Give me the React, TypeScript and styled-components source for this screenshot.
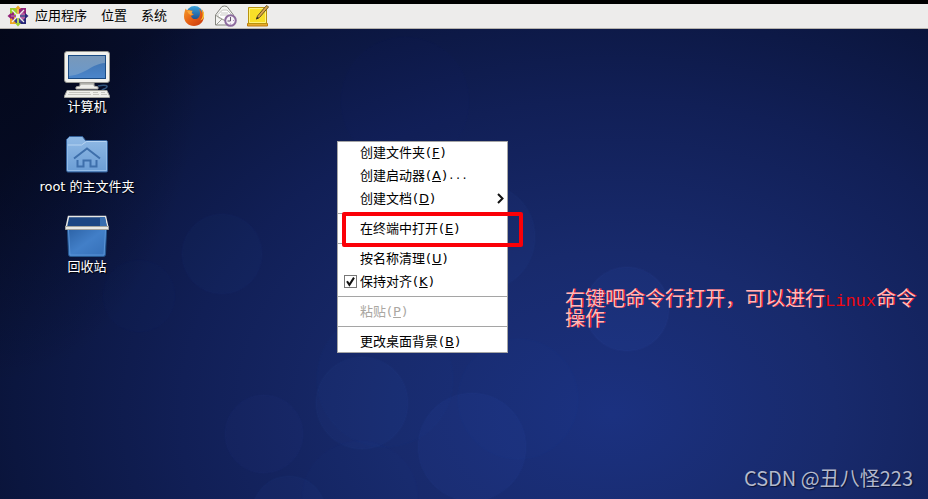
import React from "react";
import styled, { createGlobalStyle } from "styled-components";

const GlobalStyle = createGlobalStyle`
  * { box-sizing: border-box; }
  body {
    margin: 0;
    font-family: "DejaVu Sans", "Noto Sans CJK SC", sans-serif;
    font-size: 13px;
    line-height: 18px;
    background: #000;
  }
`;

const Screen = styled.div`
  display: flex;
  flex-direction: column;
  min-height: 100vh;
  padding-top: 4px;
`;

const Panel = styled.header`
  display: flex;
  align-items: center;
  gap: 12px;
  height: 25px;
  padding: 0 6px;
  background: #edeceb;
  border-bottom: 1px solid #b5b2ac;
`;

const PanelMenus = styled.nav`
  display: flex;
  gap: 14px;
`;

const PanelButton = styled.button`
  display: flex;
  align-items: center;
  gap: 5px;
  height: 24px;
  padding: 0;
  border: 0;
  background: none;
  color: #000;
  font: inherit;
`;

const Launchers = styled.div`
  display: flex;
  gap: 9px;
  padding-left: 4px;
`;

const Desktop = styled.main`
  position: relative;
  flex: 1;
  overflow: hidden;
  background:
    radial-gradient(ellipse 22% 75% at 0% 0%, rgba(1, 3, 14, 0.65), rgba(1, 3, 14, 0) 100%),
    radial-gradient(ellipse 75% 108% at 66% 82%, #1b3180 0%, #182a6c 32%, #111f56 62%, #0b163f 86%, #081030 100%);
`;

const Wallpaper = styled.svg`
  position: absolute;
  inset: 0;
  width: 100%;
  height: 100%;
`;

const IconColumn = styled.div`
  position: relative;
  display: flex;
  flex-direction: column;
  align-items: center;
  gap: 14px;
  width: 174px;
  padding-top: 21px;
`;

const DesktopIcon = styled.button`
  display: flex;
  flex-direction: column;
  align-items: center;
  padding: 0;
  border: 0;
  background: none;
  color: #fff;
  font: inherit;
  white-space: nowrap;
  text-shadow: 1px 1px 1px #000;
`;

const ContextMenu = styled.div`
  position: absolute;
  left: 337px;
  top: 112px;
  width: 171px;
  background: #fff;
  box-shadow: inset 0 0 0 1px #a5a5a5;
`;

const MenuEntry = styled.button`
  display: flex;
  align-items: center;
  width: 100%;
  height: 23px;
  padding: 0 4px 0 23px;
  border: 0;
  background: none;
  color: #000;
  font: inherit;
  white-space: pre;

  &:disabled {
    color: #aaa7a2;
  }

  svg {
    margin-left: auto;
  }
`;

const CheckEntry = styled.label`
  display: flex;
  align-items: center;
  gap: 3px;
  height: 23px;
  padding-left: 7px;
  color: #000;
`;

const CheckBox = styled.input`
  appearance: none;
  width: 13px;
  height: 13px;
  margin: 0;
  border: 1px solid #777;
  background: #fff;

  &:checked {
    background: #fff
      url("data:image/svg+xml,%3Csvg xmlns='http://www.w3.org/2000/svg' viewBox='0 0 11 11'%3E%3Cpath d='M2 5.2 4.4 8.8 9 1.6' fill='none' stroke='%23111' stroke-width='2'/%3E%3C/svg%3E");
  }
`;

const Separator = styled.hr`
  height: 1px;
  margin: 3px 0;
  border: 0;
  background: #a5a5a5;
`;

const Marked = styled.div`
  position: relative;
`;

const RedFrame = styled.div`
  position: absolute;
  left: 5px;
  top: -5px;
  width: 181px;
  height: 35px;
  border: 4px solid #fb0007;
  border-radius: 2px;
  pointer-events: none;
`;

const Bracket = styled.span`
  padding: 0 1px;
`;

const Dots = styled.span`
  font-family: "Liberation Mono", monospace;
  font-size: 11px;
`;

const Note = styled.p`
  position: absolute;
  left: 565px;
  top: 259px;
  right: 10px;
  margin: 0;
  color: #ffb9bc;
  font-family: "Noto Sans CJK SC", sans-serif;
  font-size: 20px;
  line-height: 20px;
  text-shadow: 1px 0 0 #e8101c;
`;

const NoteLatin = styled.span`
  color: #f3060e;
  font-family: "Liberation Mono", monospace;
  font-size: 17px;
  line-height: 1px;
  text-shadow: none;
`;

const Watermark = styled.div`
  position: absolute;
  right: 15px;
  bottom: 9px;
  color: #b3b8cb;
  font-family: "Noto Sans CJK SC", sans-serif;
  font-size: 20px;
  line-height: 24px;
  text-shadow: 1px 1px 1px #0a1233;
`;

const Hotkey = ({ letter }: { letter: string }) => (
  <>
    <Bracket>(</Bracket>
    <u>{letter}</u>
    <Bracket>)</Bracket>
  </>
);

const CentosLogo = () => (
  <svg width="24" height="22" viewBox="0 0 24 22" aria-hidden="true">
    <g transform="translate(12 11)">
      <path d="M-8-8h7v7h-7z" fill="#9ccd2a" />
      <path d="M1-8h7v7H1z" fill="#932279" />
      <path d="M-8 1h7v7h-7z" fill="#efa724" />
      <path d="M1 1h7v7H1z" fill="#262577" />
      <path d="M-8-1-4-5v4zM-8 1l4 4V1z" fill="#932279" />
      <path d="M-1 8-5 4l4-3zM1 8l4-4-4-3z" fill="#3c3b8c" />
      <path d="M8 1 4 5 1 1zM8-1 4-5 1-1z" fill="#b35aa0" />
      <path d="M-6-6 6 6M6-6-6 6" stroke="#edeceb" strokeWidth="1.300" />
      <path d="M0-10.500 3-7H-3z" fill="#efa724" />
      <path d="M10.500 0 7 3V-3z" fill="#262577" />
      <path d="M0 10.500-3 7h6z" fill="#9ccd2a" />
      <path d="M-10.500 0-7-3v6z" fill="#932279" />
      <path d="M0-7v5" stroke="#efa724" strokeWidth="1.500" />
      <path d="M2 0h5" stroke="#262577" strokeWidth="1.500" />
      <path d="M0 2v5" stroke="#9ccd2a" strokeWidth="1.500" />
      <path d="M-7 0h5" stroke="#932279" strokeWidth="1.500" />
    </g>
  </svg>
);

const Firefox = () => (
  <svg width="22" height="22" viewBox="0 0 22 22" aria-hidden="true">
    <defs>
      <linearGradient id="fox" x1="0" y1="0" x2="1" y2="1">
        <stop offset="0" stopColor="#f59a28" />
        <stop offset=".55" stopColor="#e45a14" />
        <stop offset="1" stopColor="#c6360f" />
      </linearGradient>
      <linearGradient id="globe" x1="0" y1="0" x2="0" y2="1">
        <stop offset="0" stopColor="#3aa3dc" />
        <stop offset="1" stopColor="#173a7c" />
      </linearGradient>
    </defs>
    <circle cx="11.500" cy="9.500" r="8.500" fill="url(#globe)" />
    <path
      d="M2.500 3.500 4 5.300C5.400 4.700 6.900 4.800 8 5.500L9.500 5.500 8.500 8l2.500 1.500-3 1.500c.8 3 4 4 7 2.200 2.500-2 2.500-6 1-9.200 2 1.200 2.700 2.500 3 4 .3-1.500 0-3-.7-4.300C20.200 5.500 21.300 8 21 11.500 20.700 17 16.500 21 11 21S1 17 1 11.500C1 8.500 1.800 6 2.500 3.500z"
      fill="url(#fox)"
    />
    <path d="M18.500 4.500c2 4 1.700 8.500-1.500 11 3.500-.8 4.500-4 4-6.500-.4-2-1.200-3.500-2.500-4.500z" fill="#f8cb3a" />
    <path d="M4 6c1.500-.8 3-.7 4 0l1.500 0L8.500 8 10 9.500l-2.500.5-2-1.500z" fill="#f7a93c" />
  </svg>
);

const Mail = () => (
  <svg width="24" height="22" viewBox="0 0 24 22" aria-hidden="true">
    <path d="M1.500 10 8 1.500Q10.500.5 13 1.500L19.500 10v10h-18z" fill="#f4f4f2" stroke="#85857f" />
    <path d="M4 9.500 8.500 5h4.500l4.500 4.500v3l-7 3-6.500-3z" fill="#fff" stroke="#c5c5c0" />
    <path d="M2 10.500 8 14l-6 6M8 14l3 1.500 8-5" fill="none" stroke="#9b9b94" />
    <path d="M7 8h7M6 10h9" stroke="#c9c9c6" />
    <circle cx="16.500" cy="15.500" r="5.300" fill="#f5f1f7" stroke="#8c6a9e" strokeWidth="2" />
    <path d="M16.500 12v4h-3" fill="none" stroke="#65546d" />
    <path d="M16.500 18.500v1M19 15.500h1" stroke="#ad8cba" />
  </svg>
);

const NoteIcon = () => (
  <svg width="24" height="22" viewBox="0 0 24 22" aria-hidden="true">
    <path d="M.5 18.500h20V21H.5z" fill="#e8a92a" stroke="#bd7c10" />
    <path d="M1.500 2.500h18v16h-18z" fill="#f8df28" stroke="#b8920d" />
    <path d="M2.500 3.500h16v14h-16z" fill="none" stroke="#fff27b" />
    <path d="M10.500 11 18.500 1.500l1.500-1L21.500 2 12.500 12.500 9.500 14z" fill="#dca54b" stroke="#67541f" />
    <path d="m9 14.500 1-2.500 2 1z" fill="#242424" />
  </svg>
);

const Computer = () => (
  <svg width="48" height="48" viewBox="0 0 48 48" aria-hidden="true">
    <defs>
      <linearGradient id="screen" x1="0" y1="0" x2="0" y2="1">
        <stop offset="0" stopColor="#3f70ab" />
        <stop offset="1" stopColor="#4b86cb" />
      </linearGradient>
      <linearGradient id="glare" x1="0" y1="0" x2="0" y2="1">
        <stop offset="0" stopColor="#7898ba" />
        <stop offset="1" stopColor="#6b99cb" />
      </linearGradient>
    </defs>
    <path d="M35 36c8-2 11 0 8 2s-6 1-2 4" fill="none" stroke="#31557d" strokeWidth="1.500" />
    <rect x="1.500" y="1.500" width="45" height="31" rx="2.500" fill="#f1f1ed" stroke="#94948e" />
    <rect x="5.500" y="5.500" width="37" height="23" fill="url(#screen)" stroke="#194a83" />
    <path d="M6 6h36v7C28 14 24 24 6 26z" fill="url(#glare)" />
    <path d="M17 33h14v3l4 1v2H13v-2l4-1z" fill="#eeeeea" stroke="#aaa9a3" />
    <path d="M17 34h14" stroke="#979790" />
    <path d="M4 40.500h40l2.500 5.500v1.500h-45V46z" fill="#f0f0eb" stroke="#a1a19a" />
    <path d="M6 42.500h21M5 44.500h23M30 42.500h5M30 44.500h6M38 42.500h4M38 44.500h6" stroke="#c6c6bf" />
  </svg>
);

const HomeFolder = () => (
  <svg width="48" height="48" viewBox="0 0 48 48" aria-hidden="true">
    <defs>
      <linearGradient id="folder" x1="0" y1="0" x2="0" y2="1">
        <stop offset="0" stopColor="#91bae5" />
        <stop offset="1" stopColor="#6b9dd5" />
      </linearGradient>
    </defs>
    <path d="M3.500 40V9.500l3-3h13l3 4H43c1 0 1.500.5 1.500 1.500v28.500c0 1-.5 1.500-1.500 1.500H5c-1 0-1.500-1-1.500-2z" fill="url(#folder)" stroke="#335f98" />
    <path d="M4.500 15h14l5-3.500h20" fill="none" stroke="#b7d4f2" />
    <path d="M4.500 15v25.500h39V12" fill="none" stroke="#94bce7" />
    <path d="M11 28.500 24 18.500l13 10M14.500 30v6.500h6v-6h7v6h6V30" fill="none" stroke="#3e6fab" strokeWidth="2" />
  </svg>
);

const Trash = () => (
  <svg width="48" height="48" viewBox="0 0 48 48" aria-hidden="true">
    <defs>
      <linearGradient id="bin" x1="0" y1="0" x2="1" y2="1">
        <stop offset="0" stopColor="#2c62a5" />
        <stop offset=".5" stopColor="#427fc8" />
        <stop offset="1" stopColor="#356fb7" />
      </linearGradient>
    </defs>
    <path d="M5.500 6.500h37L45 18H3z" fill="#1c4683" stroke="#e8e8e4" strokeWidth="1.500" />
    <path d="M37 7h5l2 10h-7z" fill="#376daf" />
    <path d="M4.500 18h39l-1 26.500c0 1-1 2-2 2h-33c-1 0-2-1-2-2z" fill="url(#bin)" stroke="#25578f" />
    <path d="m5.500 20 1.500 25h34l1.500-25" fill="none" stroke="#5993d6" />
    <path d="M2.500 16.500h43v3h-43z" fill="#e9e9e4" stroke="#a3a49f" />
  </svg>
);

const bubbles = [
  { x: 222, y: 225, r: 40, o: 0.03 },
  { x: 139, y: 267, r: 36, o: 0.015 },
  { x: 481, y: 208, r: 54, o: 0.045 },
  { x: 627, y: 280, r: 42, o: 0.06 },
  { x: 362, y: 374, r: 46, o: 0.045 },
  { x: 472, y: 418, r: 54, o: 0.05 },
  { x: 264, y: 405, r: 39, o: 0.035 },
  { x: 289, y: 484, r: 37, o: 0.045 },
  { x: 385, y: 350, r: 68, o: 0.02 },
  { x: 518, y: 370, r: 60, o: 0.02 },
  { x: 405, y: 72, r: 64, o: 0.012 },
  { x: 360, y: 470, r: 58, o: 0.015 },
];

export default function App() {
  return (
    <Screen>
      <GlobalStyle />
      <Panel>
        <PanelMenus>
          <PanelButton><CentosLogo />应用程序</PanelButton>
          <PanelButton>位置</PanelButton>
          <PanelButton>系统</PanelButton>
        </PanelMenus>
        <Launchers>
          <PanelButton aria-label="Firefox"><Firefox /></PanelButton>
          <PanelButton aria-label="邮件"><Mail /></PanelButton>
          <PanelButton aria-label="便笺"><NoteIcon /></PanelButton>
        </Launchers>
      </Panel>
      <Desktop>
        <Wallpaper viewBox="0 0 928 470" preserveAspectRatio="xMinYMin slice" aria-hidden="true">
          {bubbles.map((b) => (
            <circle key={`${b.x}-${b.y}`} cx={b.x} cy={b.y} r={b.r} fill="#4a78e8" fillOpacity={b.o} stroke="#6288e8" strokeOpacity={b.o / 2} strokeWidth="2" />
          ))}
        </Wallpaper>
        <IconColumn>
          <DesktopIcon><Computer />计算机</DesktopIcon>
          <DesktopIcon><HomeFolder />root 的主文件夹</DesktopIcon>
          <DesktopIcon><Trash />回收站</DesktopIcon>
        </IconColumn>
        <ContextMenu>
          <MenuEntry>创建文件夹<Hotkey letter="F" /></MenuEntry>
          <MenuEntry>创建启动器<Hotkey letter="A" /><Dots>...</Dots></MenuEntry>
          <MenuEntry>
            创建文档<Hotkey letter="D" />
            <svg width="7" height="11" viewBox="0 0 7 11" aria-hidden="true">
              <path d="m1 1 4.500 4.500L1 10" fill="none" stroke="#111" strokeWidth="2" />
            </svg>
          </MenuEntry>
          <Separator />
          <Marked>
            <MenuEntry>在终端中打开<Hotkey letter="E" /></MenuEntry>
            <RedFrame />
          </Marked>
          <Separator />
          <MenuEntry>按名称清理<Hotkey letter="U" /></MenuEntry>
          <CheckEntry>
            <CheckBox type="checkbox" defaultChecked />
            <span>保持对齐<Hotkey letter="K" /></span>
          </CheckEntry>
          <Separator />
          <MenuEntry disabled>粘贴<Hotkey letter="P" /></MenuEntry>
          <Separator />
          <MenuEntry>更改桌面背景<Hotkey letter="B" /></MenuEntry>
        </ContextMenu>
        <Note>右键吧命令行打开，可以进行<NoteLatin>Linux</NoteLatin>命令操作</Note>
        <Watermark>CSDN @丑八怪223</Watermark>
      </Desktop>
    </Screen>
  );
}
